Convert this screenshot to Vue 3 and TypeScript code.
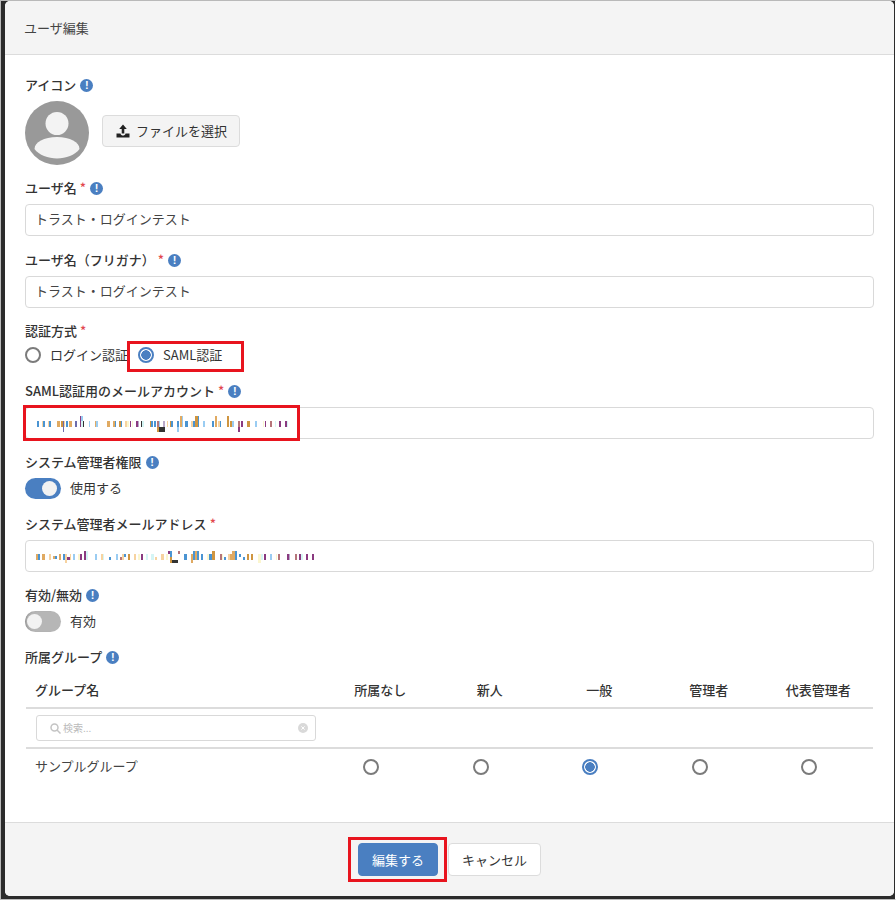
<script setup lang="ts">
type Bar = [number, number, string, number?, number?]

const c: Record<string, string> = {
  b: '#4a94d2', o: '#e0aa62', d: '#cf9540', p: '#8a3a80', r: '#b5757a', l: '#9accf2',
  y: '#f7d3a0', w: '#fbf6cf', n: '#d5f5f5', k: '#333333', m: '#6c6cac', g: '#b9a9c9'
}

const line1: Bar[] = [
  [37,2,'b'],[42,1,'y'],[43,2,'b'],[48,1,'y'],[49,2,'b'],[57,3,'o'],[61,2,'d'],[63,1,'m',421,11],[64,1,'y'],
  [66,2,'b'],[69,3,'o'],[75,2,'m'],[80,1,'p',416,11],[81,2,'l',416,5],[81,2,'n'],[83,1,'k'],[89,1,'l'],
  [95,1,'o'],[96,2,'l'],[107,3,'o'],[113,2,'o'],[115,1,'b'],[119,2,'d'],[121,1,'b'],[125,2,'y'],[127,2,'w'],
  [130,1,'p'],[132,1,'w'],[136,2,'p'],[138,1,'g'],[141,1,'k'],[142,2,'n'],[150,1,'d'],[151,2,'b'],[154,2,'b'],
  [157,2,'r'],[159,1,'l'],[157,2,'d',427,5],[159,6,'k',427,5],[163,2,'g'],[167,1,'y'],[170,1,'d'],[171,2,'b'],
  [177,2,'b'],[177,2,'l',427,5],[180,3,'o',416,11],[182,1,'l',416,11],[185,3,'b'],[191,2,'y'],[193,2,'b'],
  [195,3,'d',416,11],[198,1,'b',416,11],[203,2,'l'],[212,2,'b'],[215,2,'o',416,11],[218,2,'y'],[220,1,'b'],
  [227,2,'d',416,11],[230,2,'d'],[232,2,'l'],[238,2,'r'],[238,2,'p',427,5],[241,2,'p'],[247,3,'d'],[255,2,'l'],
  [263,1,'w'],[265,1,'p'],[270,2,'r'],[275,1,'n'],[279,2,'p'],[285,2,'p'],[287,1,'n']
]

const line2: Bar[] = [
  [36,2,'o'],[38,2,'b'],[42,3,'o'],[49,2,'y'],[53,2,'o',556,3],[55,2,'b',556,3],[59,2,'o'],[63,2,'b'],
  [65,2,'y',554,9],[67,3,'p',557,3],[70,1,'y'],[73,2,'l'],[78,2,'w'],[80,2,'p'],[84,2,'p',551,9],[86,2,'n',551,9],
  [95,2,'l'],[101,2,'y'],[103,1,'n'],[109,2,'b',557,3],[116,2,'l'],[120,2,'r',557,3],[122,2,'y'],[124,2,'b',554,3],
  [128,2,'d'],[134,2,'y'],[138,2,'w'],[141,2,'p'],[146,2,'n'],[151,3,'n'],[155,2,'y',557,3],[161,3,'y'],[166,2,'w'],
  [168,2,'p',551,3],[170,2,'b',551,6],[170,2,'d',557,6],[172,6,'k',560,3],[178,2,'r',551,3],[184,3,'b'],
  [191,2,'o',554,9],[193,2,'b',551,9],[195,3,'o',551,9],[197,2,'b',551,9],[201,2,'b'],[207,2,'w'],[209,3,'b'],
  [212,3,'d',551,9],[220,2,'r'],[222,1,'w'],[224,2,'b',557,3],[228,2,'y'],[230,2,'o'],[232,3,'o',551,9],
  [235,2,'b',551,9],[239,2,'b',554,3],[243,2,'b',557,3],[247,2,'d'],[251,2,'d'],[258,3,'w',554,9],[261,2,'n'],
  [264,2,'p'],[270,2,'l'],[276,1,'w'],[278,2,'r'],[287,2,'p'],[289,1,'g'],[295,2,'r'],[299,2,'p'],[301,2,'n'],
  [306,2,'p'],[312,2,'p']
]

const roles = ['所属なし', '新人', '一般', '管理者', '代表管理者']
</script>

<template>
  <div class="page">
    <section class="modal">
      <header class="head">ユーザ編集</header>

      <div class="body">
        <div class="group">
          <div class="label">アイコン<i class="info">!</i></div>
          <div class="icon-row">
            <svg class="avatar" width="64" height="64" viewBox="0 0 64 64">
              <circle cx="32" cy="32" r="32" fill="#999999" />
              <circle cx="32" cy="22.5" r="11.5" fill="#f3f3f3" />
              <path d="M9.500 48C9.500 41 19 36 32 36S54.500 41 54.500 48C50 54 41 57.500 32 57.500S14 54 9.500 48Z" fill="#f3f3f3" />
            </svg>
            <button class="file-btn" type="button">
              <svg width="14" height="14" viewBox="0 0 14 14">
                <path d="M7 0.500L10.800 5H8.300V9.500H5.700V5H3.200Z" fill="#222" />
                <path d="M0.500 9.500H4.500C4.800 11 5.800 11.500 7 11.500S9.200 11 9.500 9.500H13.500V13.500H0.500Z" fill="#222" />
              </svg>
              <span>ファイルを選択</span>
            </button>
          </div>
        </div>

        <div class="group group-wide">
          <div class="label">ユーザ名<em>*</em><i class="info">!</i></div>
          <input class="field" value="トラスト・ログインテスト" />
        </div>

        <div class="group">
          <div class="label">ユーザ名（フリガナ）<em>*</em><i class="info">!</i></div>
          <input class="field" value="トラスト・ログインテスト" />
        </div>

        <div class="group group-radio">
          <div class="label">認証方式<em>*</em></div>
          <div class="radios">
            <label class="radio-item"><input type="radio" name="auth" class="radio" />ログイン認証</label>
            <label class="radio-item saml">
              <input type="radio" name="auth" class="radio" checked />SAML認証
              <span class="mark mark-radio"></span>
            </label>
          </div>
        </div>

        <div class="group">
          <div class="label">SAML認証用のメールアカウント<em>*</em><i class="info">!</i></div>
          <div class="field-wrap">
            <input class="field" value="" />
            <svg class="redact" width="300" height="33" viewBox="25 407 300 33">
              <rect v-for="(b, i) in line1" :key="i" :x="b[0]" :y="b[3] ?? 421" :width="b[1]" :height="b[4] ?? 6" :fill="c[b[2]]" />
            </svg>
            <span class="mark mark-field"></span>
          </div>
        </div>

        <div class="group">
          <div class="label">システム管理者権限<i class="info">!</i></div>
          <div class="toggle-row"><span class="toggle on"><span class="knob"></span></span>使用する</div>
        </div>

        <div class="group">
          <div class="label">システム管理者メールアドレス<em>*</em></div>
          <div class="field-wrap">
            <input class="field" value="" />
            <svg class="redact" width="300" height="33" viewBox="25 540 300 33">
              <rect v-for="(b, i) in line2" :key="i" :x="b[0]" :y="b[3] ?? 554" :width="b[1]" :height="b[4] ?? 6" :fill="c[b[2]]" />
            </svg>
          </div>
        </div>

        <div class="group">
          <div class="label">有効/無効<i class="info">!</i></div>
          <div class="toggle-row"><span class="toggle"><span class="knob"></span></span>有効</div>
        </div>

        <div class="group">
          <div class="label">所属グループ<i class="info">!</i></div>
          <table class="groups">
            <thead>
              <tr>
                <th class="name">グループ名</th>
                <th v-for="r in roles" :key="r">{{ r }}</th>
              </tr>
              <tr class="search-row">
                <td class="search-cell">
                  <div class="search">
                    <svg width="11" height="11" viewBox="0 0 11 11" fill="none" stroke="#c4c4c4" stroke-width="1.500">
                      <circle cx="4.500" cy="4.500" r="3.500" />
                      <path d="M7 7L10.500 10.500" />
                    </svg>
                    <span class="placeholder">検索...</span>
                    <svg class="clear" width="10" height="10" viewBox="0 0 10 10">
                      <circle cx="5" cy="5" r="5" fill="#d9d9d9" />
                      <path d="M3.400 3.400L6.600 6.600M6.600 3.400L3.400 6.600" stroke="#fff" stroke-width="1" />
                    </svg>
                  </div>
                </td>
                <td colspan="5"></td>
              </tr>
            </thead>
            <tbody>
              <tr>
                <td class="name">サンプルグループ</td>
                <td v-for="(r, i) in roles" :key="r" class="cell">
                  <input type="radio" name="role" class="radio" :checked="i === 2" />
                </td>
              </tr>
            </tbody>
          </table>
        </div>
      </div>

      <footer class="foot">
        <button class="btn primary" type="button">編集する<span class="mark mark-btn"></span></button>
        <button class="btn" type="button">キャンセル</button>
      </footer>
    </section>
  </div>
</template>

<style>
html, body { margin: 0; background: #fff; }
</style>

<style scoped>
.page {
  box-sizing: border-box;
  width: 896px;
  height: 900px;
  padding: 0 1px 3px 4px;
  background: #2b2b2b;
  border: 1px solid #b9b9b9;
  border-right-color: #fff;
  font: 13px/20px "Noto Sans CJK JP", sans-serif;
  color: #333;
}
.modal {
  width: 889px;
  height: 895px;
  display: flex;
  flex-direction: column;
  background: #fff;
  border-radius: 5px;
  overflow: hidden;
}
.head {
  box-sizing: border-box;
  height: 54px;
  padding: 17px 19px;
  background: #f4f4f4;
  border-bottom: 1px solid #dcdcdc;
  color: #444;
}
.body {
  flex: 1;
  padding: 20px 20px 0;
}
.group { margin-bottom: 13px; }
.group-wide { margin-bottom: 14px; }
.group-radio { margin-bottom: 16px; }
.group-radio .label { margin-bottom: 4px; }
.label {
  display: flex;
  align-items: center;
  height: 20px;
  margin-bottom: 6px;
  font-weight: 500;
  color: #333;
}
.label em {
  margin-left: 3px;
  color: #e2484f;
  font-style: normal;
  font-weight: 500;
}
.info {
  width: 13px;
  height: 13px;
  margin-left: 4px;
  border-radius: 50%;
  background: #4a7fc1;
  color: #fff;
  font: 700 11px/13px "Liberation Sans", sans-serif;
  text-align: center;
}
.icon-row {
  display: flex;
  align-items: center;
  gap: 13px;
}
.avatar { display: block; }
.file-btn {
  display: flex;
  align-items: center;
  gap: 6px;
  box-sizing: border-box;
  width: 138px;
  height: 32px;
  margin-bottom: 4px;
  padding: 0 0 0 13px;
  background: #f4f4f4;
  border: 1px solid #dcdcdc;
  border-radius: 4px;
  font: inherit;
  color: #333;
  white-space: nowrap;
}
.field {
  display: block;
  box-sizing: border-box;
  width: 849px;
  height: 32px;
  padding: 0 9px 4px;
  border: 1px solid #d9d9d9;
  border-radius: 4px;
  font: inherit;
  color: #444;
  background: #fff;
  outline: none;
}
.field-wrap { position: relative; }
.redact {
  position: absolute;
  left: 0;
  top: 0;
}
.radios {
  display: flex;
  gap: 10px;
}
.radio-item {
  position: relative;
  display: flex;
  align-items: center;
  gap: 9px;
}
.radio {
  appearance: none;
  box-sizing: border-box;
  flex: none;
  width: 16px;
  height: 16px;
  margin: 0;
  background: #fff;
  border: 2px solid #7b7b7b;
  border-radius: 50%;
  vertical-align: middle;
}
.radio:checked {
  border-color: #4a7fc1;
  background: radial-gradient(circle, #4a7fc1 0 4.500px, #fff 5px);
}
.mark {
  position: absolute;
  box-sizing: border-box;
  border: 3px solid #e8141e;
  pointer-events: none;
}
.mark-radio {
  left: -11px;
  top: -4px;
  width: 117px;
  height: 31px;
}
.mark-field {
  left: -2px;
  top: -2px;
  width: 277px;
  height: 36px;
}
.mark-btn {
  left: -11px;
  top: -7px;
  width: 99px;
  height: 45px;
}
.toggle-row {
  display: flex;
  gap: 9px;
  height: 23px;
  align-items: flex-start;
}
.toggle {
  display: flex;
  align-items: center;
  box-sizing: border-box;
  width: 36px;
  height: 21px;
  padding: 0 2px;
  border-radius: 11px;
  background: #b6b6b6;
  box-shadow: inset 2px 0 2px -1px #8e8e8e;
}
.toggle.on {
  justify-content: flex-end;
  padding-right: 4px;
  background: #4a7fc1;
  box-shadow: none;
}
.knob {
  width: 15px;
  height: 15px;
  border-radius: 50%;
  background: #f2f2f2;
}
.groups {
  width: 847px;
  margin-left: 1px;
  table-layout: fixed;
  border-collapse: separate;
  border-spacing: 0;
}
.groups th {
  height: 34px;
  padding: 0;
  border-bottom: 2px solid #dcdcdc;
  font-weight: 500;
  color: #333;
  text-align: center;
}
.groups th.name { width: 299.5px; }
.groups .name {
  padding-left: 9px;
  text-align: left;
  box-sizing: border-box;
}
.search-row td {
  height: 38px;
  padding: 0;
  border-bottom: 2px solid #dcdcdc;
}
.groups .search-cell { padding-left: 10px; }
.search {
  display: flex;
  align-items: center;
  box-sizing: border-box;
  width: 280px;
  height: 26px;
  padding: 0 7px 0 13px;
  border: 1px solid #d9d9d9;
  border-radius: 3px;
}
.placeholder {
  flex: 1;
  margin-left: 2px;
  font-size: 10px;
  color: #bbb;
}
.clear { flex: none; }
.groups tbody td {
  height: 34px;
  padding: 0;
}
.groups tbody td.name { padding-left: 9px; color: #444; }
.cell { text-align: center; }
.cell .radio { margin-right: 18px; }
.foot {
  box-sizing: border-box;
  height: 74px;
  display: flex;
  justify-content: center;
  align-items: flex-start;
  gap: 10px;
  padding-top: 20px;
  background: #f4f4f4;
  border-top: 1px solid #dcdcdc;
}
.btn {
  position: relative;
  box-sizing: border-box;
  width: 93px;
  height: 33px;
  padding: 0;
  background: #fff;
  border: 1px solid #dcdcdc;
  border-radius: 4px;
  font: inherit;
  color: #333;
}
.btn.primary {
  width: 80px;
  background: #4a7fc1;
  border-color: #4a7fc1;
  color: #fff;
}
</style>
